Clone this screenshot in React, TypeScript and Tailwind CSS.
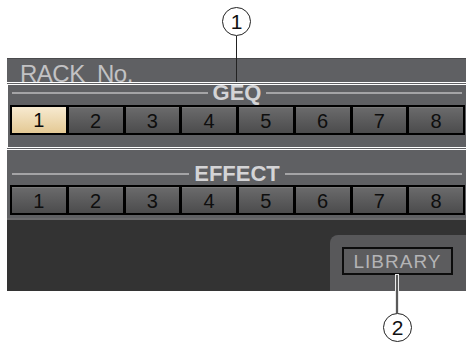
import React from "react";

const nums = [1, 2, 3, 4, 5, 6, 7, 8];

function Label({ text }: { text: string }) {
  return (
    <div className="flex h-[22px] items-center pl-[5px] pr-[4px]">
      <div className="h-[2px] flex-1 bg-[#a4a4a6]" />
      <span className="px-[5px] text-[22px] font-bold leading-none text-[#d4d4d6]">{text}</span>
      <div className="h-[2px] flex-1 bg-[#a4a4a6]" />
    </div>
  );
}

function ButtonRow({ selected }: { selected?: number }) {
  return (
    <div className="ml-[3px] flex h-[30px] w-[455px] gap-[3px] bg-black p-[2px]">
      {nums.map((n) =>
        n === selected ? (
          <div
            key={n}
            className="flex flex-1 items-center justify-center bg-linear-to-b from-[#f7ead0] to-[#e4c994] text-[20px] leading-none text-[#0a0a0a]"
          >
            {n}
          </div>
        ) : (
          <div
            key={n}
            className="flex flex-1 items-center justify-center border-t border-[#7a7a7a] bg-linear-to-b from-[#6a6a6b] to-[#4c4c4d] text-[20px] leading-none text-[#0e0e0e]"
          >
            {n}
          </div>
        )
      )}
    </div>
  );
}

function Callout({ n }: { n: number }) {
  return (
    <div className="flex h-[29px] w-[29px] items-center justify-center rounded-full border border-[#222] bg-white text-[21px] leading-none text-[#111]">
      {n}
    </div>
  );
}

export default function App() {
  return (
    <div className="relative h-[347px] w-[466px] overflow-hidden bg-white font-['Liberation_Sans',Arial,sans-serif]">
      <div className="pt-[58px] pl-[7px]">
        <div className="flex h-[233px] w-[459px] flex-col">
          <div className="h-[160px] border-t border-[#4a4a4c] bg-[#5f6063] pt-[3px] pb-[3px]">
            <div className="h-[20px] pl-[13px] text-[24px] leading-[24px] tracking-[-0.5px] text-[#c2c2c4]">
              RACK{"\u00a0\u00a0"}No.
            </div>
            <Label text="GEQ" />
            <div className="mt-[1px]">
              <ButtonRow selected={1} />
            </div>
            <div className="mt-[28px]">
              <Label text="EFFECT" />
            </div>
            <ButtonRow />
          </div>
          <div className="h-[2px] bg-[#6a6a6c]" />
          <div className="flex flex-1 flex-col items-end bg-[#333333]">
            <div className="mt-[15px] flex h-[56px] w-[136px] items-start rounded-tl-[8px] bg-[#58585a] pl-[12px] pt-[12px]">
              <div className="flex h-[28px] w-[111px] items-center justify-center border-2 border-[#0c0c0c] bg-[#5c5c5e] text-[19px] leading-none tracking-[1px] text-[#b4b4b6]">
                LIBRARY
              </div>
            </div>
          </div>
        </div>
      </div>

      {/* highlight box */}
      <div className="absolute left-[5px] top-[82px] h-[68px] w-[470px] border-[3px] border-double border-white" />

      {/* callout 1 */}
      <div className="absolute left-[222px] top-[7px]">
        <Callout n={1} />
      </div>
      <div className="absolute left-[236px] top-[36px] h-[46px] w-px bg-[#222]" />

      {/* callout 2 */}
      <div className="absolute left-[396px] top-[275px] h-[38px] w-[2px] bg-[#5a5a5a] shadow-[0_0_0_1px_#e8e8e8]" />
      <div className="absolute left-[383px] top-[313px]">
        <Callout n={2} />
      </div>
    </div>
  );
}
